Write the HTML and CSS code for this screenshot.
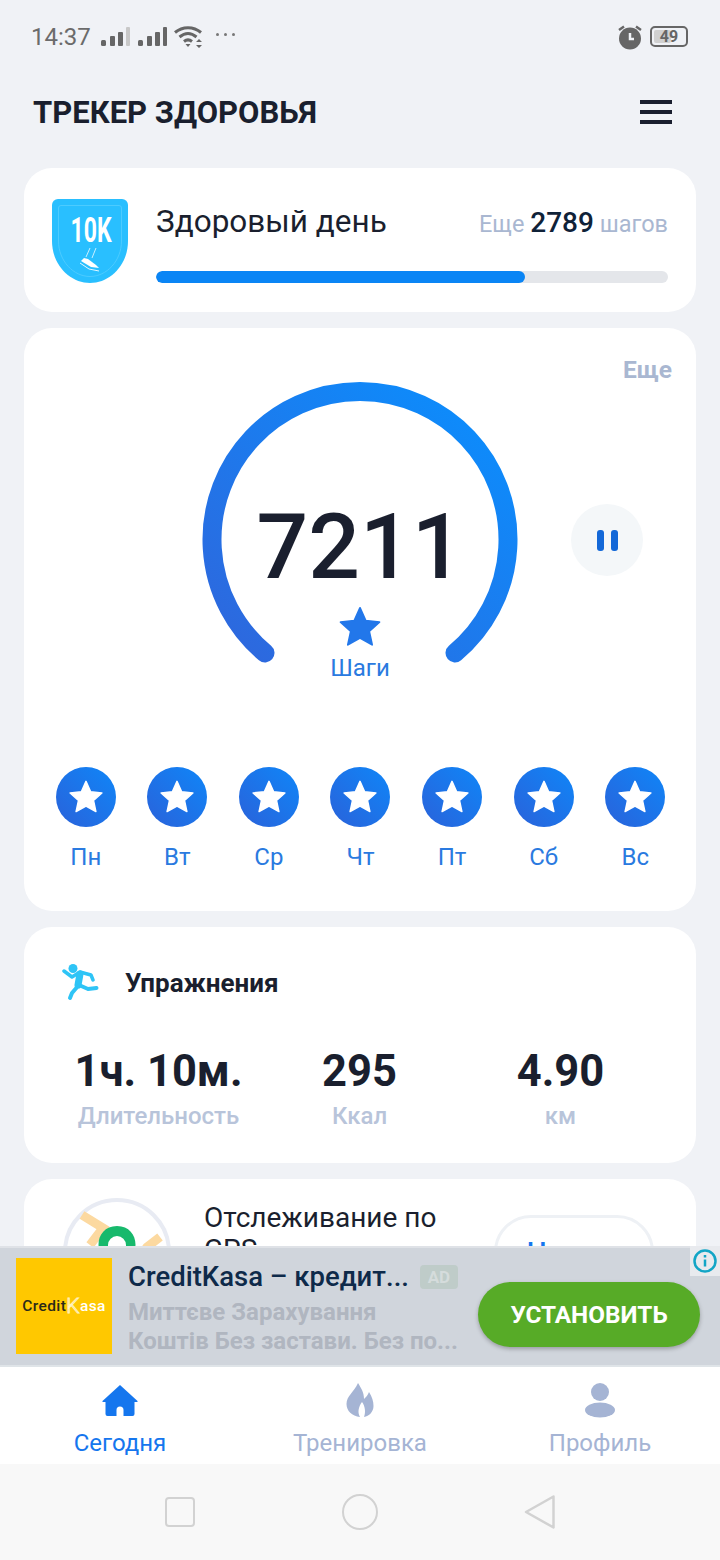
FILE: index.html
```html
<!DOCTYPE html>
<html lang="ru">

<head>
  <meta charset="utf-8" />
  <title>Трекер здоровья</title>
  <meta name="viewport" content="width=device-width, initial-scale=1">
  <link rel="stylesheet" href="styles.css">
</head>

<body>
  <svg class="defs" width="0" height="0" aria-hidden="true">
    <defs>
      <linearGradient id="blueGrad" x1="0" y1="1" x2="1" y2="0">
        <stop offset="0" stop-color="#2f66dc" />
        <stop offset="1" stop-color="#0990ff" />
      </linearGradient>
      <path id="star" d="M12 1.600l3.100 6.900 7.500.8-5.600 5 1.600 7.400L12 18l-6.600 3.700L7 14.300l-5.600-5 7.500-.8z" stroke-linejoin="round" />
    </defs>
  </svg>

  <div class="screen">
    <main class="content">
      <!-- статус бар -->
      <div class="status">
        <div class="status-left">
          <span class="time">14:37</span>
          <svg width="30" height="20" viewBox="0 0 30 20">
            <rect x="1" y="13" width="5" height="6" rx="1.500" fill="#666" />
            <rect x="10" y="9" width="5" height="10" rx="1" fill="#666" />
            <rect x="18" y="5" width="5" height="14" rx="1" fill="#666" />
            <rect x="26" y="0" width="4" height="19" rx="1" fill="#c8c8c8" />
          </svg>
          <svg width="30" height="20" viewBox="0 0 30 20">
            <rect x="1" y="13" width="5" height="6" rx="1.500" fill="#666" />
            <rect x="10" y="9" width="5" height="10" rx="1" fill="#666" />
            <rect x="18" y="5" width="5" height="14" rx="1" fill="#666" />
            <rect x="26" y="0" width="4" height="19" rx="1" fill="#666" />
          </svg>
          <svg class="wifi" width="30" height="24" viewBox="0 0 30 24" fill="none" stroke="#666" stroke-width="3">
            <path d="M1 7.500C8.500 1 19.500 1 27 7.500" />
            <path d="M5.500 12C11 7.500 17 7.500 22.500 12" />
            <path d="M10 16.500C12.500 14.500 15.500 14.500 18 16.500" />
            <path d="M11.500 19h5l-2.500 3z" fill="#666" stroke="none" />
            <path d="M22 17l3-3 3 3zM22 20l3 3 3-3z" fill="#666" stroke="none" />
          </svg>
          <span class="dots"><i></i><i></i><i></i></span>
        </div>
        <div class="status-right">
          <svg width="26" height="26" viewBox="0 0 26 26">
            <circle cx="13" cy="14.500" r="11" fill="#666" />
            <path d="M13 9v6h4" fill="none" stroke="#f0f2f6" stroke-width="2.500" />
            <path d="M2 6l5-3.500M24 6l-5-3.500" stroke="#666" stroke-width="2.500" />
          </svg>
          <div class="battery">
            <span class="battery-level"></span>
            <span class="battery-num">49</span>
          </div>
        </div>
      </div>

      <header class="topbar">
        <h1>ТРЕКЕР ЗДОРОВЬЯ</h1>
        <div class="burger"><i></i><i></i><i></i></div>
      </header>

      <!-- цель на день -->
      <section class="card goal">
        <svg class="badge" width="76" height="84" viewBox="0 0 76 84">
          <path d="M6 0h64a6 6 0 0 1 6 6v36c0 24-18 42-38 42S0 66 0 42V6a6 6 0 0 1 6-6z" fill="#29bfff" />
          <path d="M9 6.500h58a2.500 2.500 0 0 1 2.500 2.500v33c0 20-15 35.500-31.500 35.500S6.500 62 6.500 42V9A2.500 2.500 0 0 1 9 6.500z" fill="none" stroke="#4ccbff" stroke-width="1" />
          <text x="39" y="43" class="badge-text" textLength="41" lengthAdjust="spacingAndGlyphs">10K</text>
          <path d="M38 49l-4 9M44 49l-4 10" stroke="#c9efff" stroke-width="1" fill="none" />
          <path d="M29 62l3-3 4 1 8 6 3 3-8-1z" fill="#fff" />
          <path d="M28 64l9 6 10 2" fill="none" stroke="#e3f7ff" stroke-width="1" />
        </svg>
        <div class="goal-body">
          <div class="goal-row">
            <span class="goal-title">Здоровый день</span>
            <span class="goal-left">Еще <b>2789</b> шагов</span>
          </div>
          <div class="progress"><div class="progress-fill"></div></div>
        </div>
      </section>

      <!-- шаги -->
      <section class="card steps">
        <div class="more">Еще</div>
        <div class="gauge-row">
          <div class="gauge">
            <svg width="316" height="316" viewBox="0 0 316 316">
              <path d="M63 271A148 148 0 1 1 253 271" fill="none" stroke="url(#blueGrad)" stroke-width="19" stroke-linecap="round" />
            </svg>
            <div class="gauge-text">
              <span class="gauge-num">7211</span>
              <svg class="gauge-star" width="44" height="44" viewBox="0 0 24 24"><use href="#star" fill="#2277ea" stroke="#2277ea" /></svg>
              <span class="gauge-label">Шаги</span>
            </div>
          </div>
          <button class="pause"><i></i><i></i></button>
        </div>
        <div class="days">
          <div class="day"><span class="day-dot"><svg width="36" height="36" viewBox="0 0 24 24"><use href="#star" fill="#fff" stroke="#fff" /></svg></span>Пн</div>
          <div class="day"><span class="day-dot"><svg width="36" height="36" viewBox="0 0 24 24"><use href="#star" fill="#fff" stroke="#fff" /></svg></span>Вт</div>
          <div class="day"><span class="day-dot"><svg width="36" height="36" viewBox="0 0 24 24"><use href="#star" fill="#fff" stroke="#fff" /></svg></span>Ср</div>
          <div class="day"><span class="day-dot"><svg width="36" height="36" viewBox="0 0 24 24"><use href="#star" fill="#fff" stroke="#fff" /></svg></span>Чт</div>
          <div class="day"><span class="day-dot"><svg width="36" height="36" viewBox="0 0 24 24"><use href="#star" fill="#fff" stroke="#fff" /></svg></span>Пт</div>
          <div class="day"><span class="day-dot"><svg width="36" height="36" viewBox="0 0 24 24"><use href="#star" fill="#fff" stroke="#fff" /></svg></span>Сб</div>
          <div class="day"><span class="day-dot"><svg width="36" height="36" viewBox="0 0 24 24"><use href="#star" fill="#fff" stroke="#fff" /></svg></span>Вс</div>
        </div>
      </section>

      <!-- упражнения -->
      <section class="card exercise">
        <div class="exercise-head">
          <svg width="38" height="38" viewBox="0 0 38 38" fill="none" stroke="#2ec4f6" stroke-width="3.500" stroke-linecap="round" stroke-linejoin="round">
            <circle cx="11" cy="4.500" r="4.500" fill="#2ec4f6" stroke="none" />
            <path d="M2 7l8 6 8-5 11 3 2 5" />
            <path d="M18 10l-2 11" stroke-width="7" />
            <path d="M17 21l9 4 8.500-1" stroke-width="4" />
            <path d="M16 22l-6 7-2 5" stroke-width="4" />
          </svg>
          <h2>Упражнения</h2>
        </div>
        <div class="stats">
          <div class="stat"><b>1ч. 10м.</b><span>Длительность</span></div>
          <div class="stat"><b>295</b><span>Ккал</span></div>
          <div class="stat"><b>4.90</b><span>км</span></div>
        </div>
      </section>

      <!-- gps -->
      <section class="card gps">
        <svg class="gps-map" width="108" height="108" viewBox="0 0 108 108">
          <circle cx="54" cy="54" r="52" fill="#fff" stroke="#e8ebf3" stroke-width="4" />
          <path d="M19 17l21 13-13 17M97 39L84 49 70 70" fill="none" stroke="#fcd9a0" stroke-width="9" />
          <path d="M54 28c-12 0-18.500 9-18.500 18.500C35.500 60 54 82 54 82s18.500-22 18.500-35.500C72.500 37 66 28 54 28zm0 28a9 9 0 1 1 0-18 9 9 0 0 1 0 18z" fill="#17b96c" />
        </svg>
        <div class="gps-text">Отслеживание по GPS</div>
        <button class="gps-btn">Начать</button>
      </section>
    </main>

    <!-- реклама -->
    <aside class="ad">
      <div class="ad-logo"><span>Credit</span> <span class="ad-k">K</span><span class="ad-asa">asa</span></div>
      <div class="ad-info">
        <div class="ad-title"><span>CreditKasa – кредит...</span><span class="ad-tag">AD</span></div>
        <div class="ad-desc">Миттєве Зарахування<br>Коштів Без застави. Без по...</div>
      </div>
      <button class="ad-btn">УСТАНОВИТЬ</button>
      <div class="ad-i">
        <svg width="24" height="24" viewBox="0 0 24 24" fill="none" stroke="#12a5c6" stroke-width="2.500">
          <circle cx="12" cy="12" r="10.500" />
          <path d="M12 10.500v7" />
          <path d="M12 6v2.500" />
        </svg>
      </div>
    </aside>

    <nav class="tabs">
      <div class="tab active">
        <svg width="38" height="38" viewBox="0 0 38 38"><path d="M19 3L1.500 19v1h3v12a2 2 0 0 0 2 2h9v-6a3.500 3.500 0 0 1 7 0v6h9a2 2 0 0 0 2-2V20h3v-1z" fill="#1576ee" /></svg>
        Сегодня
      </div>
      <div class="tab">
        <svg width="38" height="38" viewBox="0 0 38 38"><path d="M17 1C20 6 23 10 23 17 25 15 27 13 28 10 31 15 32.500 19 32.500 24 32.500 30 28 34 23 35 25 30 24 24 21 20 18 24 16 30 19 35 11 34 5.500 29 5.500 22 5.500 14 13 10 17 1Z" fill="#a5b4d4" /></svg>
        Тренировка
      </div>
      <div class="tab">
        <svg width="38" height="38" viewBox="0 0 38 38" fill="#a5b4d4"><circle cx="19" cy="10" r="9" /><ellipse cx="19" cy="28" rx="15" ry="7.500" /></svg>
        Профиль
      </div>
    </nav>

    <div class="sysbar">
      <span class="sys-square"></span>
      <span class="sys-circle"></span>
      <svg width="34" height="36" viewBox="0 0 34 36"><path d="M30.500 2.500L3 18l27.500 15.500z" fill="none" stroke="#d2d2d2" stroke-width="2.500" stroke-linejoin="round" /></svg>
    </div>
  </div>
</body>
</html>
```

FILE: styles.css
```css
/* ===== RESET & BODY ===== */
* {
  box-sizing: border-box;
  margin: 0;
  padding: 0
}

body {
  font-family: Roboto, "Noto Sans", sans-serif;
  background: #f0f2f6;
  color: #1a1f2e
}

.defs {
  display: block
}

.screen {
  width: 720px;
  height: 1560px;
  display: flex;
  flex-direction: column;
  overflow: hidden
}

.content {
  flex: 1;
  min-height: 0;
  overflow: hidden;
  padding: 0 24px;
  display: flex;
  flex-direction: column;
  gap: 16px
}

/* ===== STATUS BAR ===== */
.status {
  flex: none;
  height: 72px;
  margin-bottom: -16px;
  padding: 1px 8px 0 7px;
  display: flex;
  justify-content: space-between;
  align-items: center
}

.status-left {
  display: flex;
  align-items: center;
  gap: 7px
}

.time {
  font-size: 24px;
  color: #6b6b6b;
  margin-right: 2px
}

.dots {
  display: flex;
  gap: 5px;
  margin-left: 5px;
  margin-bottom: 4px
}

.dots i {
  width: 3px;
  height: 3px;
  border-radius: 50%;
  background: #777
}

.status-right {
  display: flex;
  align-items: center;
  gap: 7px
}

.battery {
  position: relative;
  width: 38px;
  height: 21px;
  border: 2px solid #666;
  border-radius: 5px
}

.battery-level {
  position: absolute;
  left: 2px;
  top: 2px;
  bottom: 2px;
  width: 17px;
  border-radius: 2px;
  background: #d0d0d0
}

.battery-num {
  position: absolute;
  inset: 0;
  text-align: center;
  font-size: 16px;
  line-height: 17px;
  font-weight: 700;
  color: #666
}

/* ===== HEADER ===== */
.topbar {
  flex: none;
  height: 80px;
  padding: 0 24px 0 9px;
  display: flex;
  justify-content: space-between;
  align-items: center
}

h1 {
  font-size: 31px;
  font-weight: 700
}

.burger {
  display: flex;
  flex-direction: column;
  gap: 6px
}

.burger i {
  display: block;
  width: 32px;
  height: 4px;
  background: #1a1f2e
}

/* ===== CARDS ===== */
.card {
  flex: none;
  background: #fff;
  border-radius: 28px
}

.goal {
  height: 144px;
  padding: 31px 28px 29px;
  display: flex;
  gap: 28px
}

.badge {
  flex: none;
  overflow: visible
}

.goal-body {
  flex: 1;
  padding-top: 4px;
  display: flex;
  flex-direction: column;
  justify-content: space-between
}

.goal-row {
  display: flex;
  justify-content: space-between;
  align-items: baseline
}

.goal-title {
  font-size: 31.500px
}

.goal-left {
  font-size: 23.500px;
  color: #a9b7d1
}

.goal-left b {
  font-size: 28px;
  font-weight: 500;
  color: #0f2238
}

.progress {
  height: 12px;
  border-radius: 6px;
  background: #e4e6ea;
  overflow: hidden
}

.progress-fill {
  width: 72%;
  height: 100%;
  border-radius: 6px;
  background: #0a85f5
}

.badge-text {
  font-family: Roboto, sans-serif;
  font-weight: 700;
  font-size: 35px;
  fill: #fff;
  text-anchor: middle
}

/* ===== ШАГИ ===== */
.steps {
  height: 583px;
  padding: 30px 24px 0
}

.more {
  text-align: right;
  font-size: 24.500px;
  font-weight: 700;
  line-height: 24px;
  color: #a9b7d1
}

.gauge-row {
  display: grid;
  grid-template-columns: 154px 316px 1fr;
  align-items: center
}

.gauge {
  grid-column: 2;
  position: relative;
  width: 316px;
  height: 316px
}

.gauge svg {
  display: block
}

.gauge-text {
  position: absolute;
  top: 112px;
  left: 0;
  right: 0;
  display: flex;
  flex-direction: column;
  align-items: center
}

.gauge-num {
  font-size: 91px;
  font-weight: 500;
  line-height: 106px
}

.gauge-star {
  margin-top: 5px
}

.gauge-label {
  margin-top: 5px;
  font-size: 24px;
  line-height: 28px;
  color: #2a7ae0
}

.pause {
  width: 72px;
  height: 72px;
  margin-left: 53px;
  border: 0;
  border-radius: 50%;
  background: #f4f7f9;
  display: flex;
  justify-content: center;
  align-items: center;
  gap: 7px
}

.pause i {
  width: 7px;
  height: 21px;
  border-radius: 3px;
  background: #1368d8
}

.days {
  margin: 69px -9px 0 -8px;
  display: grid;
  grid-template-columns: repeat(7, 1fr)
}

.day {
  display: flex;
  flex-direction: column;
  align-items: center;
  gap: 16px;
  font-size: 24px;
  line-height: 28px;
  color: #2a7ae0
}

.day-dot {
  width: 60px;
  height: 60px;
  border-radius: 50%;
  background: linear-gradient(45deg, #2a62da, #0f86f8);
  display: flex;
  justify-content: center;
  align-items: center
}

/* ===== УПРАЖНЕНИЯ ===== */
.exercise {
  height: 236px;
  padding: 37px 34px 0
}

.exercise-head {
  display: flex;
  align-items: center;
  gap: 25px;
  padding-left: 4px
}

h2 {
  font-size: 26px;
  font-weight: 700
}

.stats {
  margin-top: 45px;
  display: grid;
  grid-template-columns: repeat(3, 201px)
}

.stat {
  display: flex;
  flex-direction: column;
  align-items: center;
  gap: 4px
}

.stat b {
  font-size: 43.500px;
  line-height: 50px;
  font-weight: 700
}

.stat span {
  font-size: 24px;
  line-height: 30px;
  font-weight: 500;
  color: #b8c4da
}

/* ===== GPS ===== */
.gps {
  height: 200px;
  padding: 19px 40px 0 39px;
  display: flex;
  align-items: flex-start
}

.gps-map {
  flex: none
}

.gps-text {
  width: 270px;
  margin-left: 33px;
  padding-top: 4px;
  font-size: 28px;
  line-height: 32px
}

.gps-btn {
  width: 160px;
  height: 74px;
  margin: 17px 0 0 20px;
  border: 3px solid #eef1f5;
  border-radius: 37px;
  background: #fff;
  font: 500 28px Roboto, sans-serif;
  color: #1576ee
}

/* ===== РЕКЛАМА ===== */
.ad {
  flex: none;
  position: relative;
  height: 121px;
  background: #d0d5dc;
  border-top: 2px solid #dfe2e7;
  border-bottom: 2px solid #dfe4e8;
  padding: 10px 20px 0 16px;
  display: flex;
  align-items: flex-start
}

.ad-logo {
  flex: none;
  width: 96px;
  height: 96px;
  background: #ffc800;
  display: flex;
  justify-content: center;
  align-items: center;
  font-size: 15.500px;
  font-weight: 500;
  letter-spacing: .4px;
  color: #2a2a1a;
  white-space: pre
}

.ad-k {
  font-size: 21px;
  font-weight: 300;
  color: #ffc800;
  -webkit-text-stroke: 1px #fff3c0
}

.ad-asa {
  color: #fff
}

.ad-info {
  width: 350px;
  flex: none;
  margin-left: 16px
}

.ad-title {
  display: flex;
  align-items: center;
  gap: 11px;
  margin-top: 1px;
  font-size: 27.500px;
  line-height: 36px;
  font-weight: 500;
  color: #0e2a4a
}

.ad-tag {
  width: 38px;
  height: 24px;
  border-radius: 4px;
  background: #bfccc9;
  color: #d5dcdc;
  font-size: 17px;
  font-weight: 700;
  line-height: 24px;
  text-align: center
}

.ad-desc {
  margin-top: 3px;
  font-size: 24px;
  line-height: 29px;
  font-weight: 700;
  color: #b0b6c0;
  white-space: nowrap
}

.ad-btn {
  width: 222px;
  height: 65px;
  flex: none;
  margin-top: 24px;
  border: 0;
  border-radius: 33px;
  background: #57ab27;
  box-shadow: 0 2px 4px #0004;
  color: #fff;
  font: 700 24.300px Roboto, sans-serif
}

.ad-i {
  position: absolute;
  top: -2px;
  right: 0;
  width: 30px;
  height: 30px;
  background: #e8eaee;
  display: flex;
  justify-content: center;
  align-items: center
}

/* ===== НИЖНЯЯ НАВИГАЦИЯ ===== */
.tabs {
  flex: none;
  height: 97px;
  background: #fff;
  display: grid;
  grid-template-columns: repeat(3, 1fr)
}

.tab {
  padding-top: 15px;
  display: flex;
  flex-direction: column;
  align-items: center;
  gap: 9px;
  font-size: 24px;
  line-height: 28px;
  color: #a5b4d4
}

.tab.active {
  color: #1576ee
}

.sysbar {
  flex: none;
  height: 96px;
  background: #f8f8f8;
  display: grid;
  grid-template-columns: repeat(3, 180px);
  justify-content: center;
  justify-items: center;
  align-items: center
}

.sys-square {
  width: 30px;
  height: 30px;
  border: 2.500px solid #d2d2d2;
  border-radius: 4px
}

.sys-circle {
  width: 36px;
  height: 36px;
  border: 2.500px solid #d2d2d2;
  border-radius: 50%
}
```
